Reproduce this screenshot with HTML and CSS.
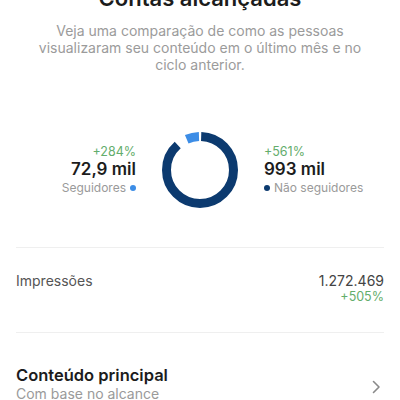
FILE: index.html
```html
<!DOCTYPE html>
<html lang="pt-BR">
<head>
<meta charset="utf-8">
<link rel="stylesheet" href="styles.css">
</head>
<body>
<main class="page">
  <section class="intro">
    <h1 class="title">Contas alcançadas</h1>
    <p class="desc">Veja uma comparação de como as pessoas visualizaram seu conteúdo em o último mês e no ciclo anterior.</p>
  </section>

  <section class="stats">
    <div class="stat stat-left">
      <span class="delta">+284%</span>
      <span class="value">72,9 mil</span>
      <span class="label">Seguidores <i class="dot dot-light"></i></span>
    </div>
    <svg class="donut" width="76" height="76" viewBox="0 0 76 76">
      <circle cx="38" cy="38" r="33.5" fill="none" stroke="#0c3a6f" stroke-width="9"
        stroke-dasharray="184.6 26" stroke-dashoffset="-1.2" transform="rotate(-90 38 38)"/>
      <circle cx="38" cy="38" r="33.5" fill="none" stroke="#3c8de6" stroke-width="9"
        stroke-dasharray="12.6 198" stroke-dashoffset="-196.5" transform="rotate(-90 38 38)"/>
    </svg>
    <div class="stat stat-right">
      <span class="delta">+561%</span>
      <span class="value">993 mil</span>
      <span class="label"><i class="dot dot-dark"></i> Não seguidores</span>
    </div>
  </section>

  <hr class="divider">

  <section class="row">
    <span class="row-label">Impressões</span>
    <div class="row-values">
      <span class="row-value">1.272.469</span>
      <span class="delta">+505%</span>
    </div>
  </section>

  <hr class="divider">

  <section class="link-row">
    <div class="link-text">
      <span class="link-title">Conteúdo principal</span>
      <span class="link-sub">Com base no alcance</span>
    </div>
    <svg class="chevron" width="9" height="14" viewBox="0 0 9 14">
      <path d="M1.5 1.5 L7 7 L1.5 12.5" fill="none" stroke="#8a8a8a" stroke-width="1.6" stroke-linecap="round" stroke-linejoin="round"/>
    </svg>
  </section>
</main>
</body>
</html>
```

FILE: styles.css
```css
* { box-sizing: border-box; }
html, body { margin: 0; padding: 0; background: #fff; }
body {
  font-family: Inter, "Noto Sans", "Liberation Sans", sans-serif;
  color: #262626;
  overflow: hidden;
}
.page {
  width: 400px;
  height: 400px;
  padding: 0 16px;
  display: flex;
  flex-direction: column;
}
.page > * { flex-shrink: 0; }
.intro {
  display: flex;
  flex-direction: column;
  align-items: center;
  text-align: center;
}
.title {
  margin: -16px 0 0;
  font-size: 22px;
  line-height: 28px;
  font-weight: 600;
  color: #1c1c1c;
}
.desc {
  margin: 11px 0 0;
  padding: 0 20px;
  font-size: 14px;
  line-height: 16.8px;
  color: #9b9b9b;
}
.stats {
  margin-top: 59px;
  display: grid;
  grid-template-columns: 1fr 76px 1fr;
  column-gap: 26px;
  align-items: center;
}
.stat {
  display: flex;
  flex-direction: column;
}
.stat-left { align-items: flex-end; }
.stat-right { align-items: flex-start; }
.delta {
  font-size: 12.5px;
  line-height: 15px;
  color: #63ad6c;
}
.value {
  font-size: 17px;
  line-height: 21px;
  font-weight: 600;
  color: #1c1c1c;
}
.label {
  font-size: 12px;
  line-height: 16px;
  color: #9a9a9a;
  display: flex;
  align-items: center;
  gap: 4px;
}
.dot {
  display: inline-block;
  width: 6px;
  height: 6px;
  border-radius: 50%;
}
.dot-light { background: #3c8de6; }
.dot-dark { background: #0c3a6f; }
.divider {
  margin: 39px 0 0;
  border: 0;
  height: 1px;
  background: #efefef;
}
.row {
  margin-top: 25px;
  display: flex;
  justify-content: space-between;
  align-items: flex-start;
}
.row-label {
  font-size: 14px;
  line-height: 16px;
  color: #555;
}
.row-values {
  display: flex;
  flex-direction: column;
  align-items: flex-end;
}
.row-value {
  font-size: 14px;
  line-height: 16px;
  color: #444;
}
.row + .divider { margin-top: 28px; }
.link-row {
  margin-top: 33px;
  display: flex;
  justify-content: space-between;
  align-items: center;
}
.link-text {
  display: flex;
  flex-direction: column;
}
.link-title {
  font-size: 16.5px;
  line-height: 19px;
  font-weight: 600;
  color: #1c1c1c;
}
.link-sub {
  font-size: 14px;
  line-height: 17px;
  color: #9a9a9a;
}
.chevron { margin-right: 3px; margin-top: 6px; }
```
